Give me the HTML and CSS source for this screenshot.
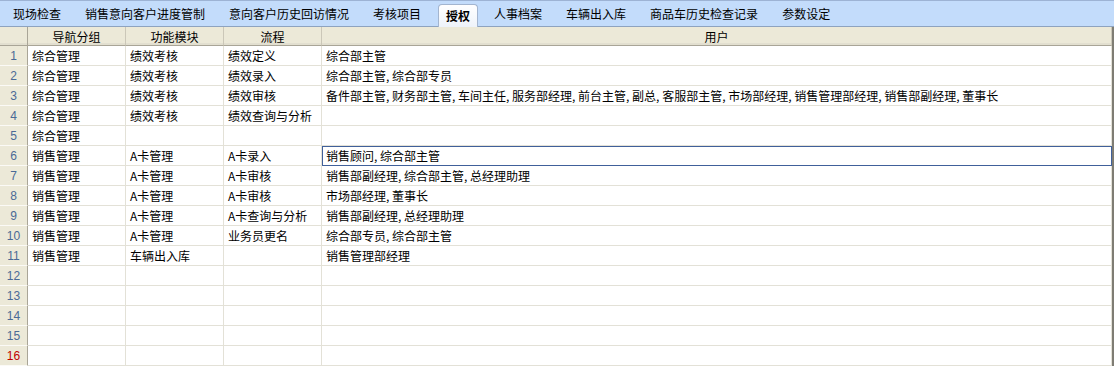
FILE: index.html
```html
<!DOCTYPE html>
<html>
<head>
	<meta charset="utf-8">
	<title>授权</title>
	<link rel="stylesheet" href="styles.css">
</head>
<body>
	<ul class="tabs">
		<li>现场检查</li>
		<li>销售意向客户进度管制</li>
		<li>意向客户历史回访情况</li>
		<li>考核项目</li>
		<li class="on">授权</li>
		<li>人事档案</li>
		<li>车辆出入库</li>
		<li>商品车历史检查记录</li>
		<li>参数设定</li>
	</ul>

	<table class="grid">
		<colgroup>
			<col class="c-no"><col class="c-a"><col class="c-a"><col class="c-a"><col>
		</colgroup>
		<thead>
			<tr><th class="no"></th><th>导航分组</th><th>功能模块</th><th>流程</th><th>用户</th></tr>
		</thead>
		<tbody>
			<tr><td class="no">1</td><td>综合管理</td><td>绩效考核</td><td>绩效定义</td><td>综合部主管</td></tr>
			<tr><td class="no">2</td><td>综合管理</td><td>绩效考核</td><td>绩效录入</td><td>综合部主管, 综合部专员</td></tr>
			<tr><td class="no">3</td><td>综合管理</td><td>绩效考核</td><td>绩效审核</td><td>备件部主管, 财务部主管, 车间主任, 服务部经理, 前台主管, 副总, 客服部主管, 市场部经理, 销售管理部经理, 销售部副经理, 董事长</td></tr>
			<tr><td class="no">4</td><td>综合管理</td><td>绩效考核</td><td>绩效查询与分析</td><td></td></tr>
			<tr><td class="no">5</td><td>综合管理</td><td></td><td></td><td></td></tr>
			<tr><td class="no">6</td><td>销售管理</td><td>A卡管理</td><td>A卡录入</td><td class="sel">销售顾问, 综合部主管</td></tr>
			<tr><td class="no">7</td><td>销售管理</td><td>A卡管理</td><td>A卡审核</td><td>销售部副经理, 综合部主管, 总经理助理</td></tr>
			<tr><td class="no">8</td><td>销售管理</td><td>A卡管理</td><td>A卡审核</td><td>市场部经理, 董事长</td></tr>
			<tr><td class="no">9</td><td>销售管理</td><td>A卡管理</td><td>A卡查询与分析</td><td>销售部副经理, 总经理助理</td></tr>
			<tr><td class="no">10</td><td>销售管理</td><td>A卡管理</td><td>业务员更名</td><td>综合部专员, 综合部主管</td></tr>
			<tr><td class="no">11</td><td>销售管理</td><td>车辆出入库</td><td></td><td>销售管理部经理</td></tr>
			<tr><td class="no">12</td><td></td><td></td><td></td><td></td></tr>
			<tr><td class="no">13</td><td></td><td></td><td></td><td></td></tr>
			<tr><td class="no">14</td><td></td><td></td><td></td><td></td></tr>
			<tr><td class="no">15</td><td></td><td></td><td></td><td></td></tr>
			<tr><td class="no cur">16</td><td></td><td></td><td></td><td></td></tr>
		</tbody>
	</table>
</body>
</html>
```

FILE: styles.css
```css
* {padding: 0; margin: 0;}
body {font-family: "Noto Sans CJK SC", sans-serif; font-size: 12px; color: #000; background: #fff; width: 1114px; overflow: hidden;}

/* 顶部选项卡 */
.tabs {display: flex; height: 27px; box-sizing: border-box; padding-left: 1px; background: #c3dcfb; border-top: 1px solid #9db3d4; border-bottom: 1px solid #8ea3bf; list-style: none; align-items: flex-end;}
.tabs li {padding: 0 12px; line-height: 25px; height: 25px; white-space: nowrap;}
/* 当前选项卡 */
.tabs li.on {font-weight: bold; height: 22px; line-height: 21px; margin: 0 4px 0 5px; padding: 0 7px; background: linear-gradient(#ffffff, #eef3fa); border: 1px solid #a3b5cf; border-bottom: none; border-radius: 4px 4px 0 0; position: relative; top: 1px;}

/* 表格 */
.grid {border-collapse: separate; border-spacing: 0; width: 1114px; table-layout: fixed; border-right: 2px solid #7f7d74;}
.grid col.c-no {width: 28px;}
.grid col.c-a {width: 98px;}
.grid th {height: 19px; box-sizing: border-box; background: #ece9d8; font-weight: normal; text-align: center; border-right: 1px solid #cbc7b8; border-bottom: 1px solid #a9a597; box-shadow: inset 0 -2px 0 #e2dfd0;}
.grid td {height: 20px; box-sizing: border-box; padding: 0 4px; white-space: nowrap; overflow: hidden; border-right: 1px solid #e3e1d7; border-bottom: 1px solid #e3e1d7;}
.grid td.no {background: #ece9d8; text-align: center; padding: 0; color: #4a6a96; font-family: "Liberation Sans", sans-serif; font-size: 12px; border-right: 1px solid #a9a597; border-bottom: 1px solid #fbfaf6;}
.grid th.no {border-right: 1px solid #a9a597;}
.grid td.cur {color: #c00000;}
.grid td.sel {outline: 1px solid #40609a; outline-offset: -1px;}
```
